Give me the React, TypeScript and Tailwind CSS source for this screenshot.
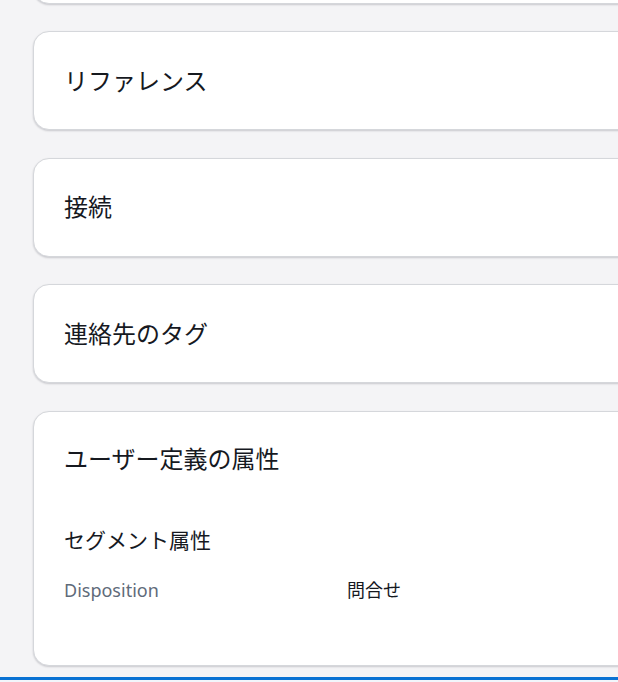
import type { ReactNode } from "react";

// 折りたたみ済みセクションのカード
function Card({ className = "", children }: { className?: string; children?: ReactNode }) {
    return (
        <div
            className={
                "w-[640px] shrink-0 rounded-[16px] border border-[#d5d7db] bg-white shadow-[0_1px_2px_rgba(0,7,22,0.18)] " +
                className
            }
        >
            {children}
        </div>
    );
}

function SectionCard({ title }: { title: string }) {
    return (
        <Card className="flex h-[99px] items-center px-[30px]">
            <h2 className="text-[24px] leading-[32px] text-[#16191f]">{title}</h2>
        </Card>
    );
}

export default function App() {
    return (
        <div
            className="relative h-[682px] w-[618px] overflow-hidden bg-[#f4f4f6]"
            style={{ fontFamily: '"Noto Sans", "Noto Sans CJK JP", sans-serif' }}
        >
            <div className="flex flex-col gap-[27.5px] pl-[33px]">
                {/* 上にスクロールしたカード */}
                <Card className="mt-[-95.5px] h-[99px]" />

                <SectionCard title="リファレンス" />
                <SectionCard title="接続" />
                <SectionCard title="連絡先のタグ" />

                {/* ユーザー定義の属性 */}
                <Card className="h-[255px] px-[30px] pt-[31px]">
                    <h2 className="text-[24px] leading-[32px] text-[#16191f]">ユーザー定義の属性</h2>
                    <h3 className="mt-[51px] text-[21px] leading-[28px] text-[#16191f]">セグメント属性</h3>
                    <div className="mt-[24px] grid grid-cols-[283px_1fr] text-[18px] leading-[24px]">
                        <span className="text-[#5f6b7a]">Disposition</span>
                        <span className="text-[#16191f]">問合せ</span>
                    </div>
                </Card>
            </div>

            {/* 下部のフッター */}
            <div className="absolute left-0 right-0 top-[677px] h-[5px] border-t-[3px] border-[#0972d3] bg-[#f2f6fb]" />
        </div>
    );
}
